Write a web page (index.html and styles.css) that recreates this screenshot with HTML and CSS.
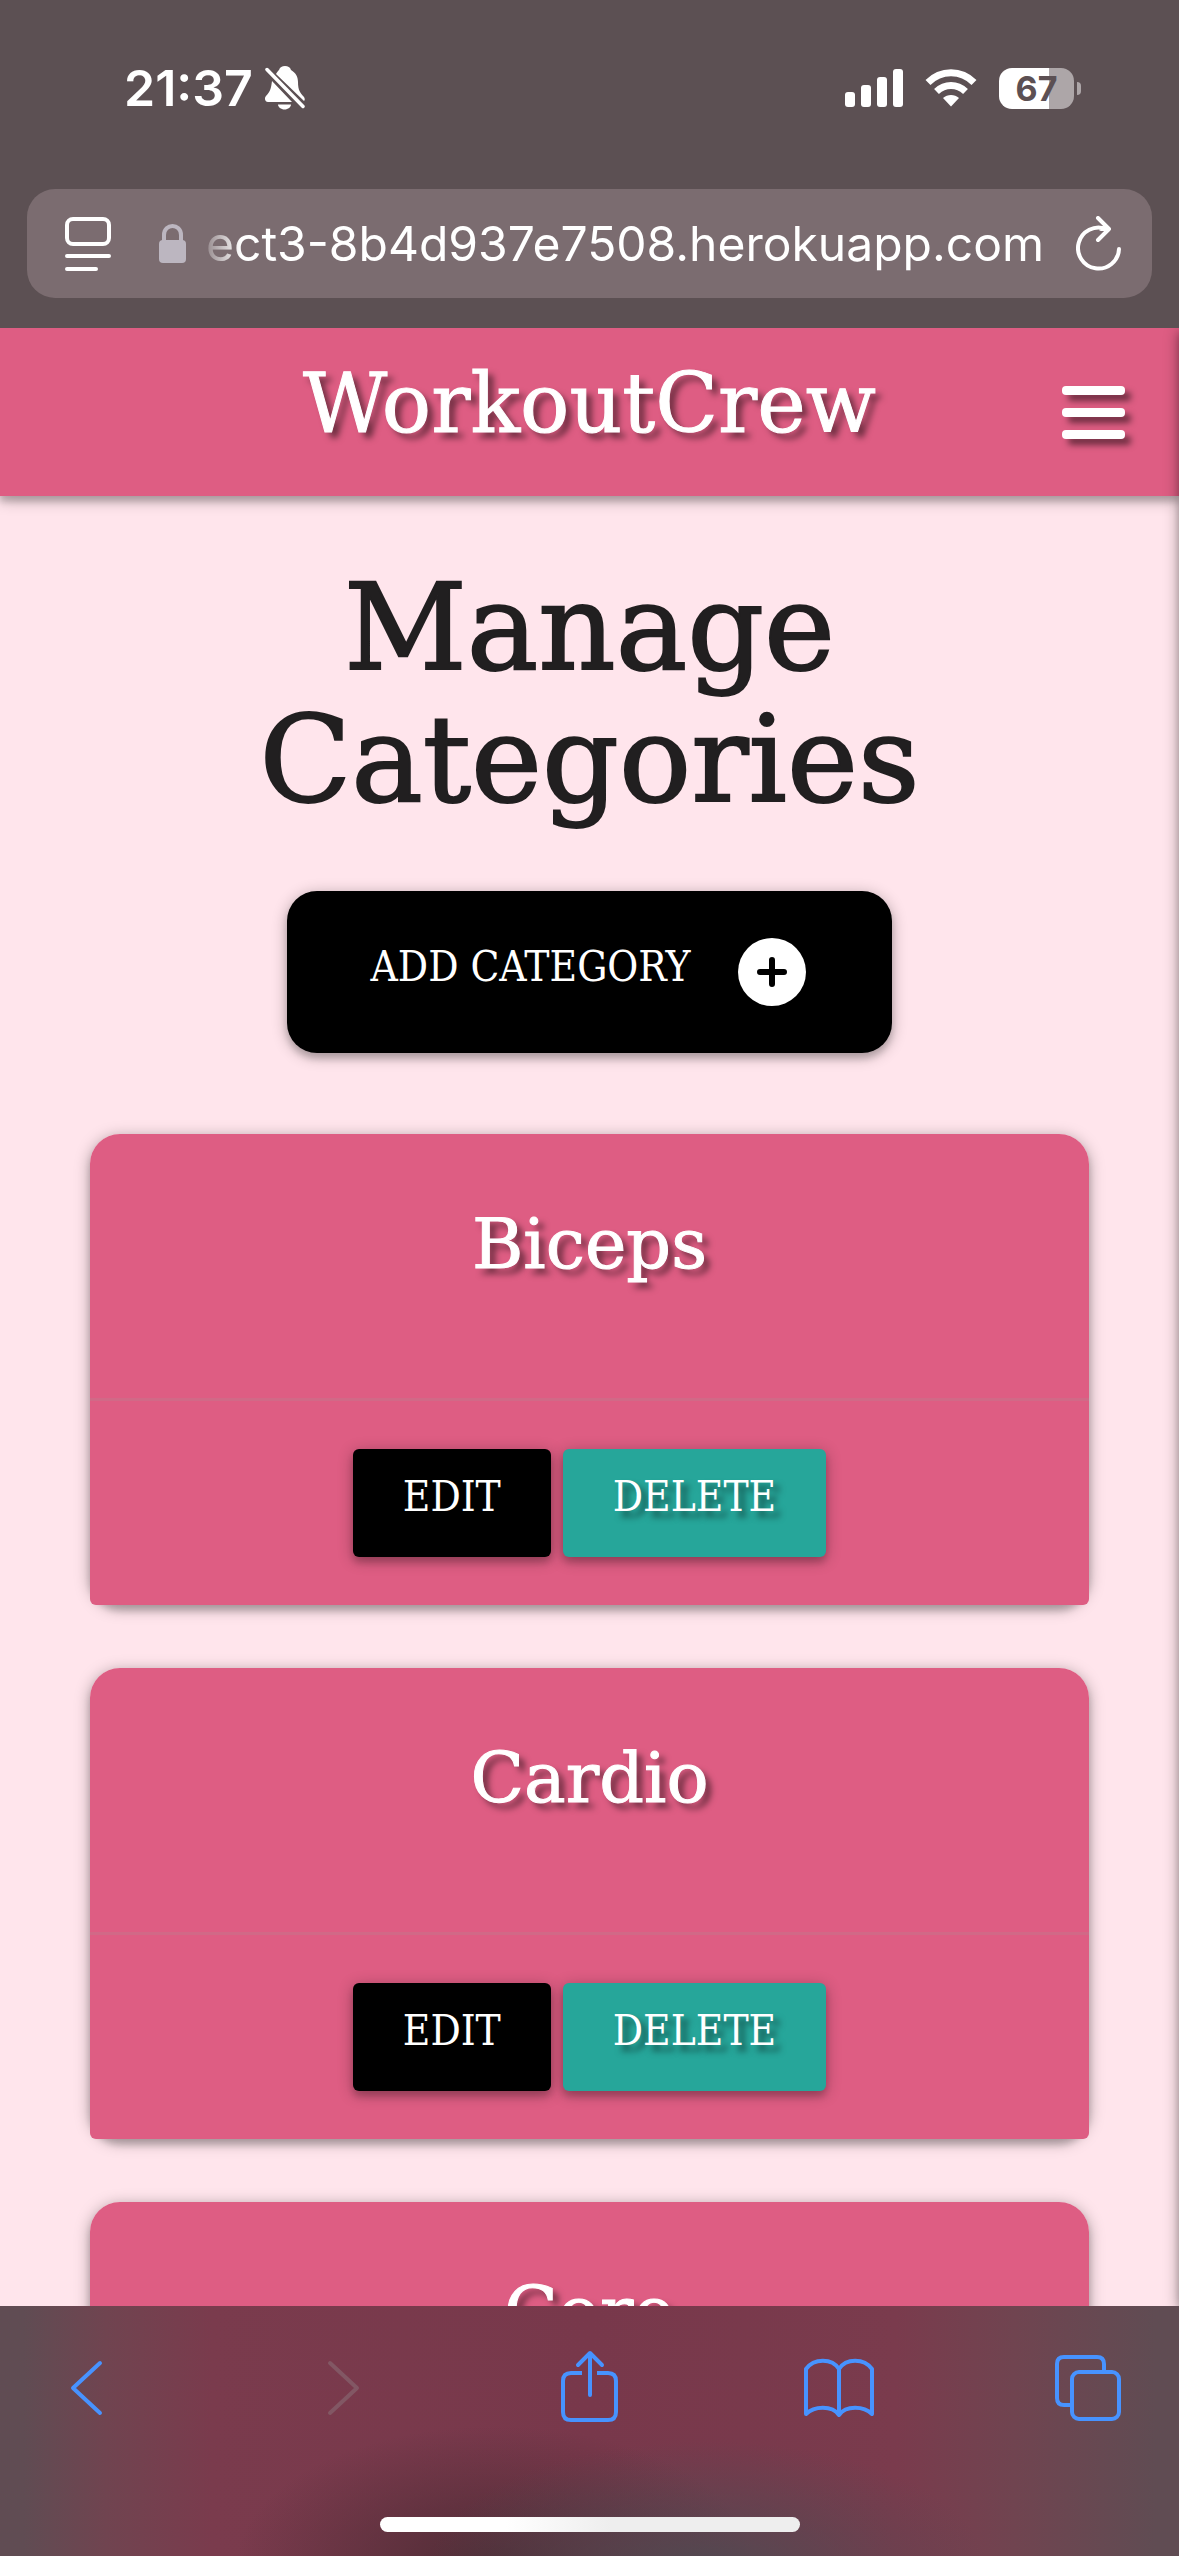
FILE: index.html
```html
<!DOCTYPE html>
<html lang="en">
<head>
<meta charset="utf-8">
<meta name="viewport" content="width=device-width, initial-scale=1">
<title>WorkoutCrew - Manage Categories</title>
<link rel="stylesheet" href="styles.css">
</head>
<body>
<div class="browser-top">
  <div class="status">
    <div class="status-group status-left">
      <span class="time">21:37</span>
      <svg class="bell" viewBox="0 0 40 44" fill="#fff" aria-hidden="true">
        <path d="M11 8 C12 6 13 5 14 4 C15 1 17 0 20 0 C23 0 25 1 26 4 C31 7 33 11 33 16 C33 24 35 27 39 31 C40 33 40 34 39 35 Z"/>
        <path d="M7 15 L27 36 H3 C0 36 -1 32 1 30 C5 26 6 23 7 15 Z"/>
        <path d="M13 38.500 H26 C26 41 23 43.500 19.500 43.500 C16 43.500 13 41 13 38.500 Z"/>
        <path d="M2 3.500 L38 40.500" stroke="#fff" stroke-width="3.500" stroke-linecap="round"/>
      </svg>
    </div>
    <div class="status-group status-right">
      <svg class="signal" viewBox="0 0 58 38" fill="#fff" aria-hidden="true">
        <rect x="0" y="23" width="10" height="15" rx="3"/><rect x="16" y="16" width="10" height="22" rx="3"/><rect x="32" y="8" width="10" height="30" rx="3"/><rect x="48" y="0" width="10" height="38" rx="3"/>
      </svg>
      <svg class="wifi" viewBox="0 0 52 38" aria-hidden="true">
        <g fill="none" stroke="#fff" stroke-width="7"><path d="M3 13.500 C16 0.500 36 0.500 49 13.500"/><path d="M11.500 22.500 C20 14.500 32 14.500 40.500 22.500"/></g>
        <path fill="#fff" d="M18 29 C22.500 25 29.500 25 34 29 L26 37.500 Z"/>
      </svg>
      <div class="battery"><span class="battery-body">67</span><span class="battery-nub"></span></div>
    </div>
  </div>
  <div class="address">
    <button class="icon-button" type="button" aria-label="Page menu">
      <svg class="page-icon" viewBox="0 0 46 54" fill="none" stroke="#fff" stroke-width="4" stroke-linecap="round" aria-hidden="true"><rect x="2" y="2" width="42" height="25" rx="6"/><path d="M2 39 H44 M2 52 H31"/></svg>
    </button>
    <svg class="lock" viewBox="0 0 28 40" aria-hidden="true"><rect y="16" width="27" height="23" rx="4" fill="#bcb6c0"/><path d="M5 18 V11 C5 -1 22 -1 22 11 V18" fill="none" stroke="#bcb6c0" stroke-width="4"/></svg>
    <input class="url" type="text" aria-label="Address" value="ect3-8b4d937e7508.herokuapp.com" readonly>
    <button class="icon-button" type="button" aria-label="Reload">
      <svg class="reload-icon" viewBox="0 0 46 56" fill="none" stroke="#fff" stroke-width="4" stroke-linecap="round" stroke-linejoin="round" aria-hidden="true"><path d="M43 33 A20.500 20.500 0 1 1 30 13 M22 2 L33 13 L22 24 M33 13 H25"/></svg>
    </button>
  </div>
</div>

<div class="page">
  <nav class="navbar">
    <a class="brand" href="#">WorkoutCrew</a>
    <button class="menu" type="button" aria-label="Menu"><span class="bar"></span><span class="bar"></span><span class="bar"></span></button>
  </nav>
  <main class="content">
    <h1 class="heading">Manage Categories</h1>
    <a class="add" href="#"><span class="add-label">ADD CATEGORY</span>
      <svg class="plus" viewBox="0 0 68 68" aria-hidden="true"><circle cx="34" cy="34" r="34" fill="#fff"/><path d="M34 22 V46 M22 34 H46" stroke="#000" stroke-width="6" stroke-linecap="round"/></svg>
    </a>
    <section class="card">
      <h2 class="card-title">Biceps</h2>
      <div class="actions"><a class="button edit" href="#">EDIT</a><a class="button delete" href="#">DELETE</a></div>
    </section>
    <section class="card">
      <h2 class="card-title">Cardio</h2>
      <div class="actions"><a class="button edit" href="#">EDIT</a><a class="button delete" href="#">DELETE</a></div>
    </section>
    <section class="card">
      <h2 class="card-title">Core</h2>
    </section>
  </main>
</div>

<div class="toolbar">
  <div class="tools">
    <button class="tool" type="button" aria-label="Back"><svg viewBox="0 0 72 72" aria-hidden="true"><path d="M48 13 L21 38 L48 63"/></svg></button>
    <button class="tool" type="button" aria-label="Forward" disabled><svg viewBox="0 0 72 72" aria-hidden="true"><path d="M27 13 L54 38 L27 63"/></svg></button>
    <button class="tool" type="button" aria-label="Share"><svg viewBox="0 0 72 72" aria-hidden="true"><path d="M36 45 V4 M24 15 L36 3 L48 15"/><path stroke-linecap="butt" d="M28 23 H17 Q9 23 9 31 V62 Q9 70 17 70 H54 Q62 70 62 62 V31 Q62 23 54 23 H43"/></svg></button>
    <button class="tool" type="button" aria-label="Bookmarks"><svg viewBox="0 0 72 72" aria-hidden="true"><path d="M35 19 C28 8 10 8 2 19 V64 C10 56 28 55 35 65 C42 55 60 56 68 64 V19 C60 8 42 8 35 19 V65"/></svg></button>
    <button class="tool" type="button" aria-label="Tabs"><svg viewBox="0 0 72 72" aria-hidden="true"><rect x="17" y="22" width="47" height="47" rx="7"/><path stroke-linecap="butt" d="M17 55 H9 Q2 55 2 48 V14 Q2 7 9 7 H42 Q49 7 49 14 V22"/></svg></button>
  </div>
  <div class="home"></div>
</div>
</body>
</html>
```
FILE: styles.css
```css
* { box-sizing: border-box; }

body {
  margin: 0;
  height: 100vh;
  display: flex;
  flex-direction: column;
  overflow: hidden;
  background: #ffe5ec;
  font-family: "DejaVu Serif", serif;
}

button {
  padding: 0;
  border: 0;
  background: none;
}

svg { display: block; flex: none; }
a { text-decoration: none; }

/* Browser chrome, top */
.browser-top {
  flex: none;
  padding: 58px 27px 30px;
  background: #5c5053;
  font-family: Inter, "Liberation Sans", sans-serif;
  color: #fff;
}

.status {
  display: flex;
  justify-content: space-between;
  align-items: center;
  height: 60px;
  padding: 0 71px 0 97px;
  margin-bottom: 71px;
}

.status-group { display: flex; align-items: center; }
.status-left { gap: 12px; }
.status-right { gap: 22px; }
.time { font-size: 50px; font-weight: 600; line-height: 60px; }
.bell { width: 40px; height: 44px; }
.signal { width: 58px; height: 38px; }
.wifi { width: 52px; height: 38px; }
.battery { display: flex; align-items: center; gap: 3px; }

.battery-body {
  width: 75px;
  height: 41px;
  border-radius: 13px;
  background: linear-gradient(90deg, #fff 67%, #ada6a8 67%);
  color: #5c5053;
  font-size: 34px;
  font-weight: 700;
  line-height: 41px;
  text-align: center;
}

.battery-nub {
  width: 4px;
  height: 13px;
  border-radius: 0 4px 4px 0;
  background: #ada6a8;
}

.address {
  display: flex;
  align-items: center;
  height: 109px;
  padding: 0 30px 0 38px;
  border-radius: 28px;
  background: #7b6c70;
}

.icon-button { flex: none; }
.page-icon { width: 46px; height: 54px; }
.lock { width: 28px; height: 40px; margin-left: 48px; }
.reload-icon { width: 46px; height: 56px; }

.url {
  flex: 1;
  min-width: 0;
  padding: 0;
  margin: 0 32px 0 10px;
  border: 0;
  background: none;
  color: #fff;
  font-family: inherit;
  font-size: 48px;
  line-height: 60px;
  text-align: right;
  mask-image: linear-gradient(90deg, transparent, #000 44px);
}

/* Site */
.page {
  position: relative;
  flex: 1;
  min-height: 0;
  overflow: hidden;
}

/* Shadow cast by the closed side menu */
.page::after {
  content: "";
  position: absolute;
  top: 0;
  bottom: 0;
  left: 100%;
  width: 20px;
  box-shadow: 0 6px 6px rgba(0, 0, 0, .14), 0 3px 15px rgba(0, 0, 0, .4);
}

.navbar {
  position: relative;
  display: flex;
  justify-content: center;
  align-items: center;
  height: 168px;
  background: #de5d83;
  box-shadow: 0 6px 6px rgba(0, 0, 0, .14), 0 3px 15px rgba(0, 0, 0, .32);
}

.brand {
  padding-bottom: 16px;
  color: #fff;
  font-size: 82px;
  line-height: 90px;
  -webkit-text-stroke: 1px currentColor;
  text-shadow: 6px 6px 6px rgba(0, 0, 0, .5);
}

.menu {
  position: absolute;
  right: 54px;
  display: flex;
  flex-direction: column;
  gap: 13px;
}

.bar {
  width: 63px;
  height: 9px;
  border-radius: 4px;
  background: #fff;
  box-shadow: 6px 6px 6px rgba(0, 0, 0, .5);
}

.content {
  display: flex;
  flex-direction: column;
  align-items: center;
  padding: 66px 90px 0;
}

.heading {
  max-width: 800px;
  margin: 0 0 65px;
  color: #211f20;
  font-size: 120px;
  font-weight: 400;
  line-height: 132px;
  text-align: center;
  -webkit-text-stroke: 2px currentColor;
}

.add {
  display: flex;
  align-items: center;
  gap: 48px;
  height: 162px;
  padding: 0 86px 0 84px;
  margin-bottom: 81px;
  border-radius: 30px;
  background: #000;
  color: #fff;
  box-shadow: 0 6px 6px rgba(0, 0, 0, .14), 0 3px 15px rgba(0, 0, 0, .3);
}

.add-label, .button {
  font-family: "DejaVu Serif Condensed", "DejaVu Serif", serif;
  font-size: 42px;
  line-height: 48px;
}

.add-label { padding-bottom: 10px; }
.plus { width: 68px; height: 68px; }

.card {
  flex: none;
  width: 100%;
  margin-bottom: 63px;
  border-radius: 30px;
  box-shadow: 0 6px 6px rgba(0, 0, 0, .14), 0 3px 15px rgba(0, 0, 0, .34);
}

.card-title {
  margin: 0;
  padding: 68px 48px 112px;
  border-radius: 30px 30px 0 0;
  background: #de5d83;
  color: #fff;
  font-size: 70px;
  font-weight: 400;
  line-height: 84px;
  text-align: center;
  -webkit-text-stroke: 1px currentColor;
  text-shadow: 6px 6px 6px rgba(0, 0, 0, .5);
}

.actions {
  display: flex;
  justify-content: center;
  gap: 12px;
  padding: 48px;
  border-top: 3px solid #d16987;
  border-radius: 0 0 6px 6px;
  background: #de5d83;
}

.button {
  padding: 24px 50px 36px;
  border-radius: 6px;
  color: #fff;
  box-shadow: 0 6px 6px rgba(0, 0, 0, .14), 0 3px 15px rgba(0, 0, 0, .3);
}

.edit { background: #000; }
.delete { background: #26a69a; text-shadow: 6px 6px 6px rgba(0, 0, 0, .5); }

/* Browser chrome, bottom */
.toolbar {
  flex: none;
  padding: 44px 52px 24px;
  background:
    radial-gradient(280px 130px at 60% 106%, rgba(77, 75, 82, .9), transparent),
    radial-gradient(260px 140px at 42% 104%, rgba(72, 42, 50, .85), transparent),
    linear-gradient(90deg, #604c53, #604c53 2%, #704450 9%, #7a3b4d 18%, #78384b 50%, #7a3b4d 76%, #704450 86%, #604c53 98%);
}

.tools { display: flex; justify-content: space-between; }
.tool { width: 72px; height: 72px; }

.tool svg {
  width: 72px;
  height: 72px;
  fill: none;
  stroke: #4793ff;
  stroke-width: 4;
  stroke-linecap: round;
  stroke-linejoin: round;
}

.tool:disabled svg { stroke: #825764; }

.home {
  width: 420px;
  height: 15px;
  margin: 95px auto 0;
  border-radius: 8px;
  background: linear-gradient(90deg, #fff 30%, #eee 55%);
}
```
